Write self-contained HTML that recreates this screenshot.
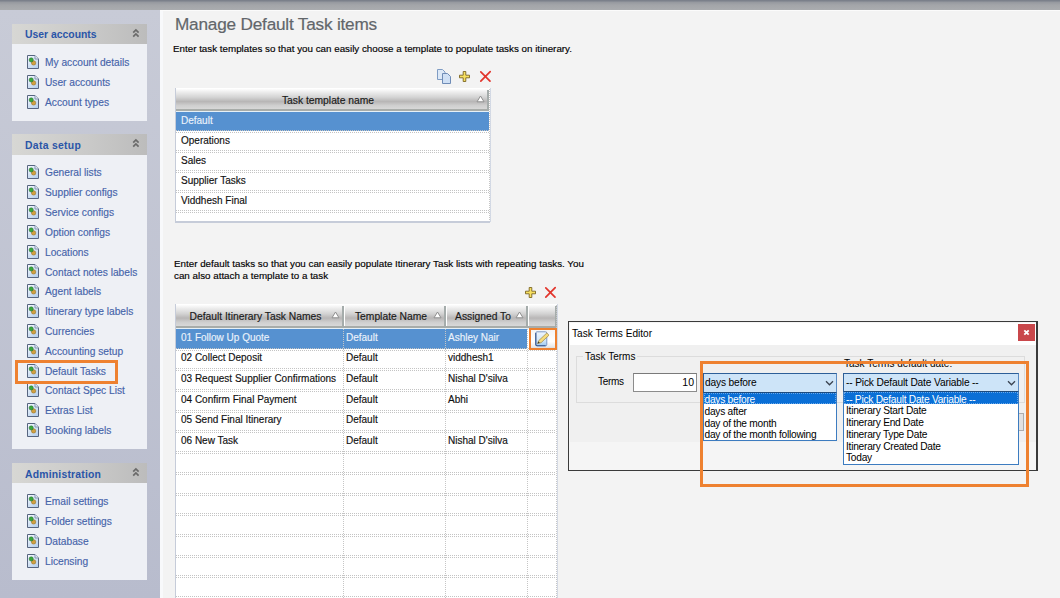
<!DOCTYPE html><html><head><meta charset="utf-8"><style>
*{margin:0;padding:0;box-sizing:border-box}
html,body{width:1060px;height:598px;overflow:hidden;background:#f3f3f3;font-family:"Liberation Sans",sans-serif;font-size:10px;color:#000}
.desc,.lk,.cell,.nw{-webkit-text-stroke:0.15px currentColor}
.abs{position:absolute}
svg{display:block}
.nw{white-space:nowrap}
#topbar{left:0;top:0;width:1060px;height:10px;background:linear-gradient(#767b86 0,#80858f 1px,#979aa0 2.5px,#a3a5a9 5px,#aaacaf 10px)}
#side{left:0;top:10px;width:160px;height:588px;background:linear-gradient(#c8cbd7,#b8bccd)}
.panel{position:absolute;left:12px;width:135px;background:#eef0f5}
.ph{position:absolute;left:0;top:0;width:135px;height:20px;background:linear-gradient(90deg,#d7d7d4,#cacac9 55%,#bcbcbc)}
.ph span{position:absolute;left:13px;top:5px;font-weight:bold;font-size:10.4px;color:#2a55a8;white-space:nowrap}
.chev{position:absolute;left:118.6px;top:3.2px}
.lk{position:absolute;left:45px;color:#4664aa;font-size:10.2px;white-space:nowrap}
.ic{position:absolute;left:27px}
.title{left:175px;top:14.3px;font-size:17.2px;color:#62666a;white-space:nowrap;letter-spacing:-0.2px;-webkit-text-stroke:0.2px currentColor}
.desc{left:173px;white-space:nowrap;font-size:9.8px;color:#000}
.grid{position:absolute;background:#fff;overflow:hidden}
.hdr{position:absolute;top:0;background:linear-gradient(#fbfbfb 0,#ececec 20%,#c9c9c9 55%,#d6d6d6 80%,#e2e2e2 90%,#a9a9a9 100%);border-right:2px solid #aeb5bd;}
.hdr span{position:absolute;white-space:nowrap;color:#222;font-size:10.3px}
.cell{position:absolute;font-size:10px;color:#111;white-space:nowrap}
.sel{color:#eef4ff}
.hs{position:absolute;height:1px;background-image:linear-gradient(90deg,#c4c4c4 50%,transparent 50%);background-size:2px 1px}
.vs{position:absolute;width:1px;background-image:linear-gradient(#c6c6c6 50%,transparent 50%);background-size:1px 2px}
.dlg{font-size:10px;color:#000;-webkit-text-stroke:0}
</style></head><body>
<svg width="0" height="0" style="position:absolute"><defs><linearGradient id="dg" x1="0" y1="0" x2="0.7" y2="1"><stop offset="0" stop-color="#f6f9fd"/><stop offset="1" stop-color="#b9d2ee"/></linearGradient></defs></svg>
<div id="topbar" class="abs"></div><div id="side" class="abs"></div>
<div class="abs" style="left:160px;top:10px;width:3px;height:588px;background:#f8f9fb"></div>
<div class="abs" style="left:160px;top:10px;width:900px;height:1px;background:#fbfbfb"></div>
<div class="panel" style="top:24px;height:97px"><div class="ph" style="height:20px"><span style="letter-spacing:0px;top:5px">User accounts</span><svg class="chev" width="10" height="11" viewBox="0 0 10 11"><path d="M2.2 5.6L4.9 2.9L7.6 5.6M2.2 9.6L4.9 6.9L7.6 9.6" stroke="#6a6a6a" stroke-width="1.7" fill="none"/></svg></div></div>
<div class="panel" style="top:134px;height:315px"><div class="ph" style="height:21px"><span style="letter-spacing:0.3px;top:6px">Data setup</span><svg class="chev" width="10" height="11" viewBox="0 0 10 11"><path d="M2.2 5.6L4.9 2.9L7.6 5.6M2.2 9.6L4.9 6.9L7.6 9.6" stroke="#6a6a6a" stroke-width="1.7" fill="none"/></svg></div></div>
<div class="panel" style="top:463px;height:117px"><div class="ph" style="height:20px"><span style="letter-spacing:0.2px;top:5.5px">Administration</span><svg class="chev" width="10" height="11" viewBox="0 0 10 11"><path d="M2.2 5.6L4.9 2.9L7.6 5.6M2.2 9.6L4.9 6.9L7.6 9.6" stroke="#6a6a6a" stroke-width="1.7" fill="none"/></svg></div></div>
<div class="ic" style="top:54.7px"><svg width="12" height="14" viewBox="0 0 12 14"><path d="M0.5 0.5H8L11.5 4V13.5H0.5Z" fill="url(#dg)" stroke="#56647f" stroke-width="1"/><path d="M8 0.5V4H11.5" fill="#dfe9f5" stroke="#8795b0" stroke-width="1"/><circle cx="6.6" cy="7.9" r="2.2" fill="#d2a040" stroke="#8a6820" stroke-width="0.5"/><circle cx="4.2" cy="4.9" r="2.1" fill="#3aa83c" stroke="#1f6a2a" stroke-width="0.5"/></svg></div>
<div class="lk" style="top:56.8px">My account details</div>
<div class="ic" style="top:74.7px"><svg width="12" height="14" viewBox="0 0 12 14"><path d="M0.5 0.5H8L11.5 4V13.5H0.5Z" fill="url(#dg)" stroke="#56647f" stroke-width="1"/><path d="M8 0.5V4H11.5" fill="#dfe9f5" stroke="#8795b0" stroke-width="1"/><circle cx="6.6" cy="7.9" r="2.2" fill="#d2a040" stroke="#8a6820" stroke-width="0.5"/><circle cx="4.2" cy="4.9" r="2.1" fill="#3aa83c" stroke="#1f6a2a" stroke-width="0.5"/></svg></div>
<div class="lk" style="top:76.8px">User accounts</div>
<div class="ic" style="top:94.7px"><svg width="12" height="14" viewBox="0 0 12 14"><path d="M0.5 0.5H8L11.5 4V13.5H0.5Z" fill="url(#dg)" stroke="#56647f" stroke-width="1"/><path d="M8 0.5V4H11.5" fill="#dfe9f5" stroke="#8795b0" stroke-width="1"/><circle cx="6.6" cy="7.9" r="2.2" fill="#d2a040" stroke="#8a6820" stroke-width="0.5"/><circle cx="4.2" cy="4.9" r="2.1" fill="#3aa83c" stroke="#1f6a2a" stroke-width="0.5"/></svg></div>
<div class="lk" style="top:96.8px">Account types</div>
<div class="ic" style="top:165.3px"><svg width="12" height="14" viewBox="0 0 12 14"><path d="M0.5 0.5H8L11.5 4V13.5H0.5Z" fill="url(#dg)" stroke="#56647f" stroke-width="1"/><path d="M8 0.5V4H11.5" fill="#dfe9f5" stroke="#8795b0" stroke-width="1"/><circle cx="6.6" cy="7.9" r="2.2" fill="#d2a040" stroke="#8a6820" stroke-width="0.5"/><circle cx="4.2" cy="4.9" r="2.1" fill="#3aa83c" stroke="#1f6a2a" stroke-width="0.5"/></svg></div>
<div class="lk" style="top:167.4px">General lists</div>
<div class="ic" style="top:185.1px"><svg width="12" height="14" viewBox="0 0 12 14"><path d="M0.5 0.5H8L11.5 4V13.5H0.5Z" fill="url(#dg)" stroke="#56647f" stroke-width="1"/><path d="M8 0.5V4H11.5" fill="#dfe9f5" stroke="#8795b0" stroke-width="1"/><circle cx="6.6" cy="7.9" r="2.2" fill="#d2a040" stroke="#8a6820" stroke-width="0.5"/><circle cx="4.2" cy="4.9" r="2.1" fill="#3aa83c" stroke="#1f6a2a" stroke-width="0.5"/></svg></div>
<div class="lk" style="top:187.2px">Supplier configs</div>
<div class="ic" style="top:204.9px"><svg width="12" height="14" viewBox="0 0 12 14"><path d="M0.5 0.5H8L11.5 4V13.5H0.5Z" fill="url(#dg)" stroke="#56647f" stroke-width="1"/><path d="M8 0.5V4H11.5" fill="#dfe9f5" stroke="#8795b0" stroke-width="1"/><circle cx="6.6" cy="7.9" r="2.2" fill="#d2a040" stroke="#8a6820" stroke-width="0.5"/><circle cx="4.2" cy="4.9" r="2.1" fill="#3aa83c" stroke="#1f6a2a" stroke-width="0.5"/></svg></div>
<div class="lk" style="top:207.0px">Service configs</div>
<div class="ic" style="top:224.8px"><svg width="12" height="14" viewBox="0 0 12 14"><path d="M0.5 0.5H8L11.5 4V13.5H0.5Z" fill="url(#dg)" stroke="#56647f" stroke-width="1"/><path d="M8 0.5V4H11.5" fill="#dfe9f5" stroke="#8795b0" stroke-width="1"/><circle cx="6.6" cy="7.9" r="2.2" fill="#d2a040" stroke="#8a6820" stroke-width="0.5"/><circle cx="4.2" cy="4.9" r="2.1" fill="#3aa83c" stroke="#1f6a2a" stroke-width="0.5"/></svg></div>
<div class="lk" style="top:226.9px">Option configs</div>
<div class="ic" style="top:244.6px"><svg width="12" height="14" viewBox="0 0 12 14"><path d="M0.5 0.5H8L11.5 4V13.5H0.5Z" fill="url(#dg)" stroke="#56647f" stroke-width="1"/><path d="M8 0.5V4H11.5" fill="#dfe9f5" stroke="#8795b0" stroke-width="1"/><circle cx="6.6" cy="7.9" r="2.2" fill="#d2a040" stroke="#8a6820" stroke-width="0.5"/><circle cx="4.2" cy="4.9" r="2.1" fill="#3aa83c" stroke="#1f6a2a" stroke-width="0.5"/></svg></div>
<div class="lk" style="top:246.7px">Locations</div>
<div class="ic" style="top:264.4px"><svg width="12" height="14" viewBox="0 0 12 14"><path d="M0.5 0.5H8L11.5 4V13.5H0.5Z" fill="url(#dg)" stroke="#56647f" stroke-width="1"/><path d="M8 0.5V4H11.5" fill="#dfe9f5" stroke="#8795b0" stroke-width="1"/><circle cx="6.6" cy="7.9" r="2.2" fill="#d2a040" stroke="#8a6820" stroke-width="0.5"/><circle cx="4.2" cy="4.9" r="2.1" fill="#3aa83c" stroke="#1f6a2a" stroke-width="0.5"/></svg></div>
<div class="lk" style="top:266.5px">Contact notes labels</div>
<div class="ic" style="top:284.2px"><svg width="12" height="14" viewBox="0 0 12 14"><path d="M0.5 0.5H8L11.5 4V13.5H0.5Z" fill="url(#dg)" stroke="#56647f" stroke-width="1"/><path d="M8 0.5V4H11.5" fill="#dfe9f5" stroke="#8795b0" stroke-width="1"/><circle cx="6.6" cy="7.9" r="2.2" fill="#d2a040" stroke="#8a6820" stroke-width="0.5"/><circle cx="4.2" cy="4.9" r="2.1" fill="#3aa83c" stroke="#1f6a2a" stroke-width="0.5"/></svg></div>
<div class="lk" style="top:286.3px">Agent labels</div>
<div class="ic" style="top:304.0px"><svg width="12" height="14" viewBox="0 0 12 14"><path d="M0.5 0.5H8L11.5 4V13.5H0.5Z" fill="url(#dg)" stroke="#56647f" stroke-width="1"/><path d="M8 0.5V4H11.5" fill="#dfe9f5" stroke="#8795b0" stroke-width="1"/><circle cx="6.6" cy="7.9" r="2.2" fill="#d2a040" stroke="#8a6820" stroke-width="0.5"/><circle cx="4.2" cy="4.9" r="2.1" fill="#3aa83c" stroke="#1f6a2a" stroke-width="0.5"/></svg></div>
<div class="lk" style="top:306.1px">Itinerary type labels</div>
<div class="ic" style="top:323.9px"><svg width="12" height="14" viewBox="0 0 12 14"><path d="M0.5 0.5H8L11.5 4V13.5H0.5Z" fill="url(#dg)" stroke="#56647f" stroke-width="1"/><path d="M8 0.5V4H11.5" fill="#dfe9f5" stroke="#8795b0" stroke-width="1"/><circle cx="6.6" cy="7.9" r="2.2" fill="#d2a040" stroke="#8a6820" stroke-width="0.5"/><circle cx="4.2" cy="4.9" r="2.1" fill="#3aa83c" stroke="#1f6a2a" stroke-width="0.5"/></svg></div>
<div class="lk" style="top:326.0px">Currencies</div>
<div class="ic" style="top:343.7px"><svg width="12" height="14" viewBox="0 0 12 14"><path d="M0.5 0.5H8L11.5 4V13.5H0.5Z" fill="url(#dg)" stroke="#56647f" stroke-width="1"/><path d="M8 0.5V4H11.5" fill="#dfe9f5" stroke="#8795b0" stroke-width="1"/><circle cx="6.6" cy="7.9" r="2.2" fill="#d2a040" stroke="#8a6820" stroke-width="0.5"/><circle cx="4.2" cy="4.9" r="2.1" fill="#3aa83c" stroke="#1f6a2a" stroke-width="0.5"/></svg></div>
<div class="lk" style="top:345.8px">Accounting setup</div>
<div class="ic" style="top:363.5px"><svg width="12" height="14" viewBox="0 0 12 14"><path d="M0.5 0.5H8L11.5 4V13.5H0.5Z" fill="url(#dg)" stroke="#56647f" stroke-width="1"/><path d="M8 0.5V4H11.5" fill="#dfe9f5" stroke="#8795b0" stroke-width="1"/><circle cx="6.6" cy="7.9" r="2.2" fill="#d2a040" stroke="#8a6820" stroke-width="0.5"/><circle cx="4.2" cy="4.9" r="2.1" fill="#3aa83c" stroke="#1f6a2a" stroke-width="0.5"/></svg></div>
<div class="lk" style="top:365.6px">Default Tasks</div>
<div class="ic" style="top:383.3px"><svg width="12" height="14" viewBox="0 0 12 14"><path d="M0.5 0.5H8L11.5 4V13.5H0.5Z" fill="url(#dg)" stroke="#56647f" stroke-width="1"/><path d="M8 0.5V4H11.5" fill="#dfe9f5" stroke="#8795b0" stroke-width="1"/><circle cx="6.6" cy="7.9" r="2.2" fill="#d2a040" stroke="#8a6820" stroke-width="0.5"/><circle cx="4.2" cy="4.9" r="2.1" fill="#3aa83c" stroke="#1f6a2a" stroke-width="0.5"/></svg></div>
<div class="lk" style="top:385.4px">Contact Spec List</div>
<div class="ic" style="top:403.1px"><svg width="12" height="14" viewBox="0 0 12 14"><path d="M0.5 0.5H8L11.5 4V13.5H0.5Z" fill="url(#dg)" stroke="#56647f" stroke-width="1"/><path d="M8 0.5V4H11.5" fill="#dfe9f5" stroke="#8795b0" stroke-width="1"/><circle cx="6.6" cy="7.9" r="2.2" fill="#d2a040" stroke="#8a6820" stroke-width="0.5"/><circle cx="4.2" cy="4.9" r="2.1" fill="#3aa83c" stroke="#1f6a2a" stroke-width="0.5"/></svg></div>
<div class="lk" style="top:405.2px">Extras List</div>
<div class="ic" style="top:423.0px"><svg width="12" height="14" viewBox="0 0 12 14"><path d="M0.5 0.5H8L11.5 4V13.5H0.5Z" fill="url(#dg)" stroke="#56647f" stroke-width="1"/><path d="M8 0.5V4H11.5" fill="#dfe9f5" stroke="#8795b0" stroke-width="1"/><circle cx="6.6" cy="7.9" r="2.2" fill="#d2a040" stroke="#8a6820" stroke-width="0.5"/><circle cx="4.2" cy="4.9" r="2.1" fill="#3aa83c" stroke="#1f6a2a" stroke-width="0.5"/></svg></div>
<div class="lk" style="top:425.1px">Booking labels</div>
<div class="ic" style="top:494.3px"><svg width="12" height="14" viewBox="0 0 12 14"><path d="M0.5 0.5H8L11.5 4V13.5H0.5Z" fill="url(#dg)" stroke="#56647f" stroke-width="1"/><path d="M8 0.5V4H11.5" fill="#dfe9f5" stroke="#8795b0" stroke-width="1"/><circle cx="6.6" cy="7.9" r="2.2" fill="#d2a040" stroke="#8a6820" stroke-width="0.5"/><circle cx="4.2" cy="4.9" r="2.1" fill="#3aa83c" stroke="#1f6a2a" stroke-width="0.5"/></svg></div>
<div class="lk" style="top:496.4px">Email settings</div>
<div class="ic" style="top:514.2px"><svg width="12" height="14" viewBox="0 0 12 14"><path d="M0.5 0.5H8L11.5 4V13.5H0.5Z" fill="url(#dg)" stroke="#56647f" stroke-width="1"/><path d="M8 0.5V4H11.5" fill="#dfe9f5" stroke="#8795b0" stroke-width="1"/><circle cx="6.6" cy="7.9" r="2.2" fill="#d2a040" stroke="#8a6820" stroke-width="0.5"/><circle cx="4.2" cy="4.9" r="2.1" fill="#3aa83c" stroke="#1f6a2a" stroke-width="0.5"/></svg></div>
<div class="lk" style="top:516.2px">Folder settings</div>
<div class="ic" style="top:534.0px"><svg width="12" height="14" viewBox="0 0 12 14"><path d="M0.5 0.5H8L11.5 4V13.5H0.5Z" fill="url(#dg)" stroke="#56647f" stroke-width="1"/><path d="M8 0.5V4H11.5" fill="#dfe9f5" stroke="#8795b0" stroke-width="1"/><circle cx="6.6" cy="7.9" r="2.2" fill="#d2a040" stroke="#8a6820" stroke-width="0.5"/><circle cx="4.2" cy="4.9" r="2.1" fill="#3aa83c" stroke="#1f6a2a" stroke-width="0.5"/></svg></div>
<div class="lk" style="top:536.1px">Database</div>
<div class="ic" style="top:553.9px"><svg width="12" height="14" viewBox="0 0 12 14"><path d="M0.5 0.5H8L11.5 4V13.5H0.5Z" fill="url(#dg)" stroke="#56647f" stroke-width="1"/><path d="M8 0.5V4H11.5" fill="#dfe9f5" stroke="#8795b0" stroke-width="1"/><circle cx="6.6" cy="7.9" r="2.2" fill="#d2a040" stroke="#8a6820" stroke-width="0.5"/><circle cx="4.2" cy="4.9" r="2.1" fill="#3aa83c" stroke="#1f6a2a" stroke-width="0.5"/></svg></div>
<div class="lk" style="top:555.9px">Licensing</div>
<div class="abs" style="left:15px;top:359.5px;width:103px;height:24.5px;border:3px solid #ee8130"></div>
<div class="abs title">Manage Default Task items</div>
<div class="abs desc" style="top:42.7px">Enter task templates so that you can easily choose a template to populate tasks on itinerary.</div>
<div class="abs" style="left:436px;top:68px"><svg width="16" height="16" viewBox="0 0 16 16"><path d="M1.5 1.5H6.5L9 4V11.5H1.5Z" fill="#dde9f7" stroke="#7f9cc4" stroke-width="1"/><path d="M6.5 5.5H11.5L14.5 8.5V15.5H6.5Z" fill="#cfe0f5" stroke="#6f8cb6" stroke-width="1"/></svg></div>
<div class="abs" style="left:458px;top:70px"><svg width="13" height="13" viewBox="0 0 13 13"><path d="M5.2 1.5H7.8V5.2H11.5V7.8H7.8V11.5H5.2V7.8H1.5V5.2H5.2Z" fill="#f7e060" stroke="#7a6420" stroke-width="0.9" stroke-linejoin="round"/></svg></div>
<div class="abs" style="left:479px;top:70px"><svg width="13" height="13" viewBox="0 0 13 13"><path d="M1.8 1.8L11 11.2M11.2 1.6L1.8 11.2" stroke="#e2352c" stroke-width="1.7" stroke-linecap="round"/></svg></div>
<div class="abs" style="left:175px;top:88px;width:315px;height:134px;background:#fff;overflow:hidden">
<div class="abs" style="left:0px;top:1px;width:314px;height:22px;background:linear-gradient(#fdfdfd 0%,#ececec 15%,#d3d3d3 38%,#b8b6b6 57%,#cfcfcf 75%,#dddddd 100%)"></div>
<div class="abs" style="left:0px;top:20.5px;width:314px;height:2.5px;background:#a8aca9"></div>
<div class="abs" style="left:312px;top:2px;width:2px;height:21px;background:#a5acab"></div>
<div class="abs" style="left:0px;top:1px;width:1px;height:20px;background:#fff"></div>
<div class="abs nw" style="left:0px;width:306px;text-align:center;top:7.1px;font-size:10.3px;color:#1a1a1a">Task template name</div>
<div class="abs" style="left:301px;top:7.3px"><svg width="9" height="8" viewBox="0 0 9 8"><path d="M4.5 1L8 6.8H1Z" fill="#fff" stroke="#8f8f8f" stroke-width="1"/></svg></div>
<div class="abs" style="left:0;top:23px;width:315px;height:1px;background:#e6f0f6"></div>
<div class="abs" style="left:1px;top:24px;width:313px;height:19px;background:#5691d0"></div>
<div class="hs" style="left:1px;top:42px;width:313px"></div>
<div class="hs" style="left:1px;top:44px;width:313px"></div>
<div class="hs" style="left:1px;top:62px;width:313px"></div>
<div class="hs" style="left:1px;top:64px;width:313px"></div>
<div class="hs" style="left:1px;top:82px;width:313px"></div>
<div class="hs" style="left:1px;top:84px;width:313px"></div>
<div class="hs" style="left:1px;top:102px;width:313px"></div>
<div class="hs" style="left:1px;top:104px;width:313px"></div>
<div class="hs" style="left:1px;top:122px;width:313px"></div>
<div class="hs" style="left:1px;top:124px;width:313px"></div>
<div class="vs" style="left:314px;top:1px;height:134px"></div>
<div class="abs nw" style="left:6px;top:26.6px;font-size:10px;color:#eaf2fb">Default</div>
<div class="abs nw" style="left:6px;top:46.6px;font-size:10px;color:#111">Operations</div>
<div class="abs nw" style="left:6px;top:66.6px;font-size:10px;color:#111">Sales</div>
<div class="abs nw" style="left:6px;top:86.6px;font-size:10px;color:#111">Supplier Tasks</div>
<div class="abs nw" style="left:6px;top:106.6px;font-size:10px;color:#111">Viddhesh Final</div>
</div>
<div class="abs" style="left:175px;top:88px;width:1px;height:134px;background:#c6ccd9"></div>
<div class="abs" style="left:175px;top:221px;width:315px;height:1.5px;background:#c6ccd9"></div>
<div class="abs" style="left:490px;top:88px;width:1px;height:134px;background:#d3d9e4"></div>
<div class="abs desc" style="left:174px;top:258px;line-height:11.5px">Enter default tasks so that you can easily populate Itinerary Task lists with repeating tasks. You<br>can also attach a template to a task</div>
<div class="abs" style="left:524px;top:286px"><svg width="13" height="13" viewBox="0 0 13 13"><path d="M5.2 1.5H7.8V5.2H11.5V7.8H7.8V11.5H5.2V7.8H1.5V5.2H5.2Z" fill="#f7e060" stroke="#7a6420" stroke-width="0.9" stroke-linejoin="round"/></svg></div>
<div class="abs" style="left:544px;top:286px"><svg width="13" height="13" viewBox="0 0 13 13"><path d="M1.8 1.8L11 11.2M11.2 1.6L1.8 11.2" stroke="#e2352c" stroke-width="1.7" stroke-linecap="round"/></svg></div>
<div class="abs" style="left:175px;top:304px;width:382px;height:295px;background:#fff;overflow:hidden">
<div class="abs" style="left:0px;top:1px;width:169px;height:23px;background:linear-gradient(#fdfdfd 0%,#ececec 15%,#d3d3d3 38%,#b8b6b6 57%,#cfcfcf 75%,#dddddd 100%)"></div>
<div class="abs" style="left:0px;top:21.5px;width:169px;height:2.5px;background:#a8aca9"></div>
<div class="abs" style="left:167px;top:2px;width:2px;height:22px;background:#a5acab"></div>
<div class="abs" style="left:0px;top:1px;width:1px;height:21px;background:#fff"></div>
<div class="abs nw" style="left:0px;width:161px;text-align:center;top:6.8px;font-size:10.3px;color:#1a1a1a">Default Itinerary Task Names</div>
<div class="abs" style="left:156px;top:7.0px"><svg width="9" height="8" viewBox="0 0 9 8"><path d="M4.5 1L8 6.8H1Z" fill="#fff" stroke="#8f8f8f" stroke-width="1"/></svg></div>
<div class="abs" style="left:169px;top:1px;width:102px;height:23px;background:linear-gradient(#fdfdfd 0%,#ececec 15%,#d3d3d3 38%,#b8b6b6 57%,#cfcfcf 75%,#dddddd 100%)"></div>
<div class="abs" style="left:169px;top:21.5px;width:102px;height:2.5px;background:#a8aca9"></div>
<div class="abs" style="left:269px;top:2px;width:2px;height:22px;background:#a5acab"></div>
<div class="abs" style="left:169px;top:1px;width:1px;height:21px;background:#fff"></div>
<div class="abs nw" style="left:169px;width:94px;text-align:center;top:6.8px;font-size:10.3px;color:#1a1a1a">Template Name</div>
<div class="abs" style="left:258px;top:7.0px"><svg width="9" height="8" viewBox="0 0 9 8"><path d="M4.5 1L8 6.8H1Z" fill="#fff" stroke="#8f8f8f" stroke-width="1"/></svg></div>
<div class="abs" style="left:271px;top:1px;width:82px;height:23px;background:linear-gradient(#fdfdfd 0%,#ececec 15%,#d3d3d3 38%,#b8b6b6 57%,#cfcfcf 75%,#dddddd 100%)"></div>
<div class="abs" style="left:271px;top:21.5px;width:82px;height:2.5px;background:#a8aca9"></div>
<div class="abs" style="left:351px;top:2px;width:2px;height:22px;background:#a5acab"></div>
<div class="abs" style="left:271px;top:1px;width:1px;height:21px;background:#fff"></div>
<div class="abs nw" style="left:271px;width:74px;text-align:center;top:6.8px;font-size:10.3px;color:#1a1a1a">Assigned To</div>
<div class="abs" style="left:340px;top:7.0px"><svg width="9" height="8" viewBox="0 0 9 8"><path d="M4.5 1L8 6.8H1Z" fill="#fff" stroke="#8f8f8f" stroke-width="1"/></svg></div>
<div class="abs" style="left:353px;top:1px;width:29px;height:23px;background:linear-gradient(#fdfdfd 0%,#ececec 15%,#d3d3d3 38%,#b8b6b6 57%,#cfcfcf 75%,#dddddd 100%)"></div>
<div class="abs" style="left:353px;top:21.5px;width:29px;height:2.5px;background:#a8aca9"></div>
<div class="abs" style="left:380px;top:2px;width:2px;height:22px;background:#a5acab"></div>
<div class="abs" style="left:353px;top:1px;width:1px;height:21px;background:#fff"></div>
<div class="abs" style="left:0;top:24px;width:382px;height:1px;background:#e6f0f6"></div>
<div class="abs" style="left:1px;top:25px;width:351px;height:20px;background:#5691d0"></div>
<div class="hs" style="left:1px;top:44px;width:380px"></div>
<div class="hs" style="left:1px;top:46px;width:380px"></div>
<div class="hs" style="left:1px;top:64px;width:380px"></div>
<div class="hs" style="left:1px;top:66px;width:380px"></div>
<div class="hs" style="left:1px;top:85px;width:380px"></div>
<div class="hs" style="left:1px;top:87px;width:380px"></div>
<div class="hs" style="left:1px;top:106px;width:380px"></div>
<div class="hs" style="left:1px;top:108px;width:380px"></div>
<div class="hs" style="left:1px;top:126px;width:380px"></div>
<div class="hs" style="left:1px;top:128px;width:380px"></div>
<div class="hs" style="left:1px;top:147px;width:380px"></div>
<div class="hs" style="left:1px;top:149px;width:380px"></div>
<div class="hs" style="left:1px;top:168px;width:380px"></div>
<div class="hs" style="left:1px;top:170px;width:380px"></div>
<div class="hs" style="left:1px;top:189px;width:380px"></div>
<div class="hs" style="left:1px;top:191px;width:380px"></div>
<div class="hs" style="left:1px;top:209px;width:380px"></div>
<div class="hs" style="left:1px;top:211px;width:380px"></div>
<div class="hs" style="left:1px;top:230px;width:380px"></div>
<div class="hs" style="left:1px;top:232px;width:380px"></div>
<div class="hs" style="left:1px;top:251px;width:380px"></div>
<div class="hs" style="left:1px;top:253px;width:380px"></div>
<div class="hs" style="left:1px;top:271px;width:380px"></div>
<div class="hs" style="left:1px;top:273px;width:380px"></div>
<div class="hs" style="left:1px;top:292px;width:380px"></div>
<div class="hs" style="left:1px;top:294px;width:380px"></div>
<div class="vs" style="left:168px;top:25px;height:271px"></div>
<div class="vs" style="left:270px;top:25px;height:271px"></div>
<div class="vs" style="left:352px;top:25px;height:271px"></div>
<div class="vs" style="left:381px;top:1px;height:295px"></div>
<div class="abs nw" style="left:6px;top:27.8px;font-size:10px;color:#eaf2fb">01 Follow Up Quote</div>
<div class="abs nw" style="left:171px;top:27.8px;font-size:10px;color:#eaf2fb">Default</div>
<div class="abs nw" style="left:273px;top:27.8px;font-size:10px;color:#eaf2fb">Ashley Nair</div>
<div class="abs nw" style="left:6px;top:47.8px;font-size:10px;color:#111">02 Collect Deposit</div>
<div class="abs nw" style="left:171px;top:47.8px;font-size:10px;color:#111">Default</div>
<div class="abs nw" style="left:273px;top:47.8px;font-size:10px;color:#111">viddhesh1</div>
<div class="abs nw" style="left:6px;top:68.8px;font-size:10px;color:#111">03 Request Supplier Confirmations</div>
<div class="abs nw" style="left:171px;top:68.8px;font-size:10px;color:#111">Default</div>
<div class="abs nw" style="left:273px;top:68.8px;font-size:10px;color:#111">Nishal D'silva</div>
<div class="abs nw" style="left:6px;top:89.8px;font-size:10px;color:#111">04 Confirm Final Payment</div>
<div class="abs nw" style="left:171px;top:89.8px;font-size:10px;color:#111">Default</div>
<div class="abs nw" style="left:273px;top:89.8px;font-size:10px;color:#111">Abhi</div>
<div class="abs nw" style="left:6px;top:109.8px;font-size:10px;color:#111">05 Send Final Itinerary</div>
<div class="abs nw" style="left:171px;top:109.8px;font-size:10px;color:#111">Default</div>
<div class="abs nw" style="left:6px;top:130.8px;font-size:10px;color:#111">06 New Task</div>
<div class="abs nw" style="left:171px;top:130.8px;font-size:10px;color:#111">Default</div>
<div class="abs nw" style="left:273px;top:130.8px;font-size:10px;color:#111">Nishal D'silva</div>
</div>
<div class="abs" style="left:175px;top:304px;width:1px;height:295px;background:#c6ccd9"></div>
<div class="abs" style="left:175px;top:598px;width:382px;height:1.5px;background:#c6ccd9"></div>
<div class="abs" style="left:557px;top:304px;width:1px;height:295px;background:#d3d9e4"></div>
<div class="abs" style="left:529px;top:329px;width:27px;height:21px;background:linear-gradient(#f4f4f4,#ffffff 60%,#e8e8e8 85%,#c9c9c9)"></div>
<div class="abs" style="left:534.5px;top:330.5px"><svg width="16" height="16" viewBox="0 0 16 16"><defs><linearGradient id="eg" x1="0" y1="0" x2="0" y2="1"><stop offset="0" stop-color="#eef5fc"/><stop offset="0.6" stop-color="#d2e6f8"/><stop offset="1" stop-color="#9fcbf0"/></linearGradient></defs><rect x="0.8" y="0.8" width="11" height="14" rx="1.2" fill="url(#eg)" stroke="#7090c0" stroke-width="0.9"/><path d="M0.8 2V13.6Q0.8 14.8 2 14.8H10.6" fill="none" stroke="#34558c" stroke-width="1.1"/><path d="M2.6 12.6L3.8 9.6L11.8 2L14 4.2L6.2 11.6Z" fill="#f5dc7c" stroke="#a08440" stroke-width="0.7"/><path d="M2.6 12.6L3.4 10.6L4.8 11.8Z" fill="#333"/></svg></div>
<div class="abs" style="left:528.7px;top:328px;width:28px;height:22.4px;border:2.8px solid #ee8130"></div>
<div class="abs dlg" style="left:568px;top:321px;width:470px;height:150px;border:1.5px solid #3a3a3a;border-width:1.5px 2px 1.5px 1.5px;background:#f5f5f5"></div>
<div class="abs" style="left:570px;top:323px;width:466px;height:22px;background:#fff"></div>
<div class="abs" style="left:570px;top:345px;width:466px;height:97px;background:#f0f0f0"></div>
<div class="abs dlg nw" style="left:572px;top:327.8px;font-size:10.1px">Task Terms Editor</div>
<div class="abs" style="left:1018px;top:324px;width:17px;height:17px;background:#c9474b"></div>
<svg class="abs" style="left:1018px;top:324px" width="17" height="17" viewBox="0 0 17 17"><path d="M6.3 6.3L10.7 10.7M10.7 6.3L6.3 10.7" stroke="#fff" stroke-width="1.8"/></svg>
<div class="abs" style="left:576px;top:356px;width:449px;height:47px;border:1px solid #dcdcdc"></div>
<div class="abs dlg nw" style="left:583px;top:351px;padding:0 2px;background:#f0f0f0;font-size:10px">Task Terms</div>
<div class="abs dlg nw" style="left:598px;top:376px;font-size:10px;letter-spacing:-0.3px">Terms</div>
<div class="abs" style="left:633px;top:373px;width:64px;height:19px;border:1px solid #8c8c8c;border-top-color:#7a7a7a;background:#fff"></div>
<div class="abs dlg nw" style="left:633px;top:376px;width:61px;text-align:right;font-size:10.5px">10</div>
<div class="abs dlg nw" style="left:844px;top:358px;font-size:10px">Task Terms default date:</div>
<div class="abs" style="left:1016px;top:413px;width:8px;height:18px;background:#e1e1e1;border:1px solid #adadad"></div>
<div class="abs" style="left:703px;top:373px;width:134px;height:19.5px;background:#cde4f8;border:1px solid #2d5f98;border-bottom-color:#1d4a7c;border-right-color:#5b8bc2"></div>
<div class="abs dlg nw" style="left:705px;top:377px;font-size:10.2px;letter-spacing:-0.15px">days before</div>
<div class="abs" style="left:825px;top:379.5px"><svg width="9" height="6" viewBox="0 0 9 6"><path d="M1 1.3L4.5 4.8L8 1.3" stroke="#3a4350" stroke-width="1.3" fill="none"/></svg></div>
<div class="abs" style="left:703px;top:392.5px;width:134px;height:48.5px;background:#fff;border:1px solid #3d7cc0;border-top:none"></div>
<div class="abs" style="left:704px;top:392.5px;width:132px;height:11.75px;background:#0a6fd6;outline:1px dotted #6aa8e8;outline-offset:-1px"></div>
<div class="abs dlg nw" style="left:704.5px;top:394.0px;line-height:11.75px;font-size:10.2px;letter-spacing:-0.25px;color:#fff">days before</div>
<div class="abs dlg nw" style="left:704.5px;top:405.8px;line-height:11.75px;font-size:10.2px;letter-spacing:-0.25px;color:#000">days after</div>
<div class="abs dlg nw" style="left:704.5px;top:417.5px;line-height:11.75px;font-size:10.2px;letter-spacing:-0.25px;color:#000">day of the month</div>
<div class="abs dlg nw" style="left:704.5px;top:429.2px;line-height:11.75px;font-size:10.2px;letter-spacing:-0.25px;color:#000">day of the month following</div>
<div class="abs" style="left:843px;top:373px;width:176px;height:19px;background:#cde4f8;border:1px solid #2d5f98;border-bottom-color:#1d4a7c;border-right-color:#5b8bc2"></div>
<div class="abs dlg nw" style="left:846px;top:377px;font-size:10.2px;letter-spacing:-0.15px">-- Pick Default Date Variable --</div>
<div class="abs" style="left:1007px;top:379.5px"><svg width="9" height="6" viewBox="0 0 9 6"><path d="M1 1.3L4.5 4.8L8 1.3" stroke="#3a4350" stroke-width="1.3" fill="none"/></svg></div>
<div class="abs" style="left:843px;top:392px;width:176px;height:73px;background:#fff;border:1px solid #3d7cc0;border-top:none"></div>
<div class="abs" style="left:844px;top:392px;width:174px;height:11.75px;background:#0a6fd6;outline:1px dotted #6aa8e8;outline-offset:-1px"></div>
<div class="abs dlg nw" style="left:846px;top:393.5px;line-height:11.75px;font-size:10.2px;letter-spacing:-0.25px;color:#fff">-- Pick Default Date Variable --</div>
<div class="abs dlg nw" style="left:846px;top:405.2px;line-height:11.75px;font-size:10.2px;letter-spacing:-0.25px;color:#000">Itinerary Start Date</div>
<div class="abs dlg nw" style="left:846px;top:417.0px;line-height:11.75px;font-size:10.2px;letter-spacing:-0.25px;color:#000">Itinerary End Date</div>
<div class="abs dlg nw" style="left:846px;top:428.8px;line-height:11.75px;font-size:10.2px;letter-spacing:-0.25px;color:#000">Itinerary Type Date</div>
<div class="abs dlg nw" style="left:846px;top:440.5px;line-height:11.75px;font-size:10.2px;letter-spacing:-0.25px;color:#000">Itinerary Created Date</div>
<div class="abs dlg nw" style="left:846px;top:452.2px;line-height:11.75px;font-size:10.2px;letter-spacing:-0.25px;color:#000">Today</div>
<div class="abs" style="left:700px;top:361px;width:329px;height:126px;border:3px solid #ee8130"></div>
</body></html>
